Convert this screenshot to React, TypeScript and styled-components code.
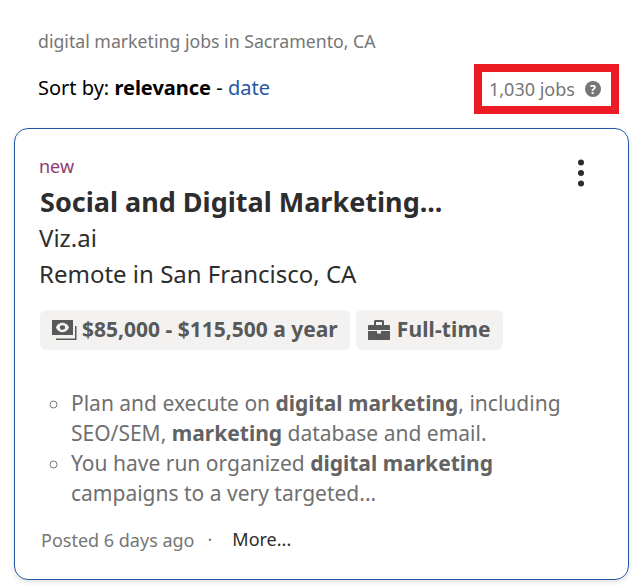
import React from "react";
import styled, { createGlobalStyle } from "styled-components";

const Global = createGlobalStyle`
  html, body { margin: 0; padding: 0; background: #fff; }
  body { font-family: "Noto Sans", "Open Sans", sans-serif; width: 643px; height: 586px; overflow: hidden; }
`;
const Page = styled.div`
  padding: 29px 14px 0;
  width: 615px;
`;
const Query = styled.div`
  font-size: 17.7px;
  line-height: 24px;
  color: #767676;
  padding-left: 24px;
`;
const SortRow = styled.div`
  display: flex;
  justify-content: space-between;
  align-items: center;
  height: 50px;
  margin-top: 11px;
  padding-left: 24px;
  padding-right: 10px;
`;
const Sort = styled.div`
  font-size: 20px;
  color: #000;
  margin-top: -4px;
  b { font-weight: 700; }
`;
const DateLink = styled.span`
  color: #2557a7;
`;
const CountBox = styled.div`
  box-sizing: border-box;
  width: 145px;
  height: 50px;
  border: 8px solid #ed1c24;
  display: flex;
  align-items: center;
  padding-left: 7px;
  gap: 10px;
  font-size: 18px;
  color: #767676;
`;
const Card = styled.div`
  box-sizing: border-box;
  margin-top: 14px;
  height: 452px;
  border: 1px solid #2557a7;
  border-radius: 14px;
  box-shadow: 0 2px 5px rgba(0,0,0,0.12);
  padding: 25px 25px 0;
  position: relative;
`;
const New = styled.div`
  font-size: 18px;
  line-height: 24px;
  color: #8f3a6e;
  margin-left: -1px;
`;
const Title = styled.div`
  font-size: 27px;
  font-weight: 700;
  line-height: 36px;
  color: #2d2d2d;
  margin-top: 6px;
`;
const Menu = styled.svg`
  position: absolute;
  top: 30px;
  right: 42px;
`;
const Line = styled.div`
  font-size: 24px;
  line-height: 36px;
  color: #2d2d2d;
  margin-left: -1px;
`;
const Chips = styled.div`
  display: flex;
  gap: 6px;
  margin-top: 18px;
`;
const Chip = styled.div`
  display: flex;
  align-items: center;
  gap: 5px;
  height: 40px;
  padding: 0 12px;
  border-radius: 6px;
  background: #f3f2f1;
  color: #595959;
  font-size: 21px;
  font-weight: 700;
  line-height: 38px;
`;
const ChipText = styled.span`
  margin-top: -2px;
`;
const WideChipText = styled(ChipText)`
  letter-spacing: 0.12px;
`;
const Snippet = styled.ul`
  list-style: circle;
  margin: 38px 0 0;
  padding: 0 24px 0 31px;
  font-size: 21px;
  line-height: 30px;
  color: #6f6f6f;
  b { font-weight: 700; color: #636363; }
  li::marker { color: #767676; }
`;
const Footer = styled.div`
  display: flex;
  align-items: center;
  margin-top: 16px;
  padding-left: 1px;
  height: 30px;
  font-size: 18px;
  color: #767676;
`;
const Posted = styled.span`
  padding-top: 2px;
`;
const Dot = styled.span`
  margin: 0 20px 0 13px;
`;
const More = styled.span`
  color: #2d2d2d;
`;

export default function App() {
  return (
    <Page>
      <Global />
      <Query>digital marketing jobs in Sacramento, CA</Query>
      <SortRow>
        <Sort>
          Sort by: <b>relevance</b> - <DateLink>date</DateLink>
        </Sort>
        <CountBox>
          1,030 jobs
          <svg width="16" height="16" viewBox="0 0 16 16">
            <circle cx="8" cy="8" r="8" fill="#767676" />
            <text x="8" y="12.5" textAnchor="middle" fontSize="12.5" fontWeight="700" fontFamily="Noto Sans" fill="#fff">?</text>
          </svg>
        </CountBox>
      </SortRow>
      <Card>
        <New>new</New>
        <Title>Social and Digital Marketing...</Title>
        <Menu width="10" height="28" viewBox="0 0 10 28">
          <circle cx="5" cy="3.5" r="3" fill="#2d2d2d" />
          <circle cx="5" cy="14" r="3" fill="#2d2d2d" />
          <circle cx="5" cy="24.5" r="3" fill="#2d2d2d" />
        </Menu>
        <Line>Viz.ai</Line>
        <Line>Remote in San Francisco, CA</Line>
        <Chips>
          <Chip>
            <svg width="25" height="20" viewBox="0 0 25 20" fill="#595959">
              <path fillRule="evenodd" d="M0 0h21v15H0zM10.500 2.800C7 2.800 4.600 5.500 4 7.500c.6 2 3 4.700 6.500 4.700S16.400 9.500 17 7.500c-.6-2-3-4.700-6.500-4.700z" />
              <ellipse cx="10.500" cy="7.500" rx="2.600" ry="2.300" />
              <path d="M23 6h1.500v14H4v-1.500h19z" />
            </svg>
            <ChipText>$85,000 - $115,500 a year</ChipText>
          </Chip>
          <Chip>
            <svg width="22" height="20" viewBox="0 0 22 20" fill="#595959" style={{ marginRight: 2 }}>
              <path fillRule="evenodd" d="M6 5V1.500C6 .6 6.700 0 7.500 0h7c.8 0 1.500.6 1.500 1.500V5h5c.6 0 1 .4 1 1v4H0V6c0-.6.4-1 1-1zM8 2v3h6V2z" />
              <path d="M0 11h9v2.500h4V11h9v8c0 .6-.4 1-1 1H1c-.6 0-1-.4-1-1z" />
            </svg>
            <WideChipText>Full-time</WideChipText>
          </Chip>
        </Chips>
        <Snippet>
          <li>Plan and execute on <b>digital marketing</b>, including SEO/SEM, <b>marketing</b> database and email.</li>
          <li>You have run organized <b>digital marketing</b> campaigns to a very targeted...</li>
        </Snippet>
        <Footer>
          <Posted>Posted 6 days ago</Posted>
          <Dot>·</Dot>
          <More>More...</More>
        </Footer>
      </Card>
    </Page>
  );
}
